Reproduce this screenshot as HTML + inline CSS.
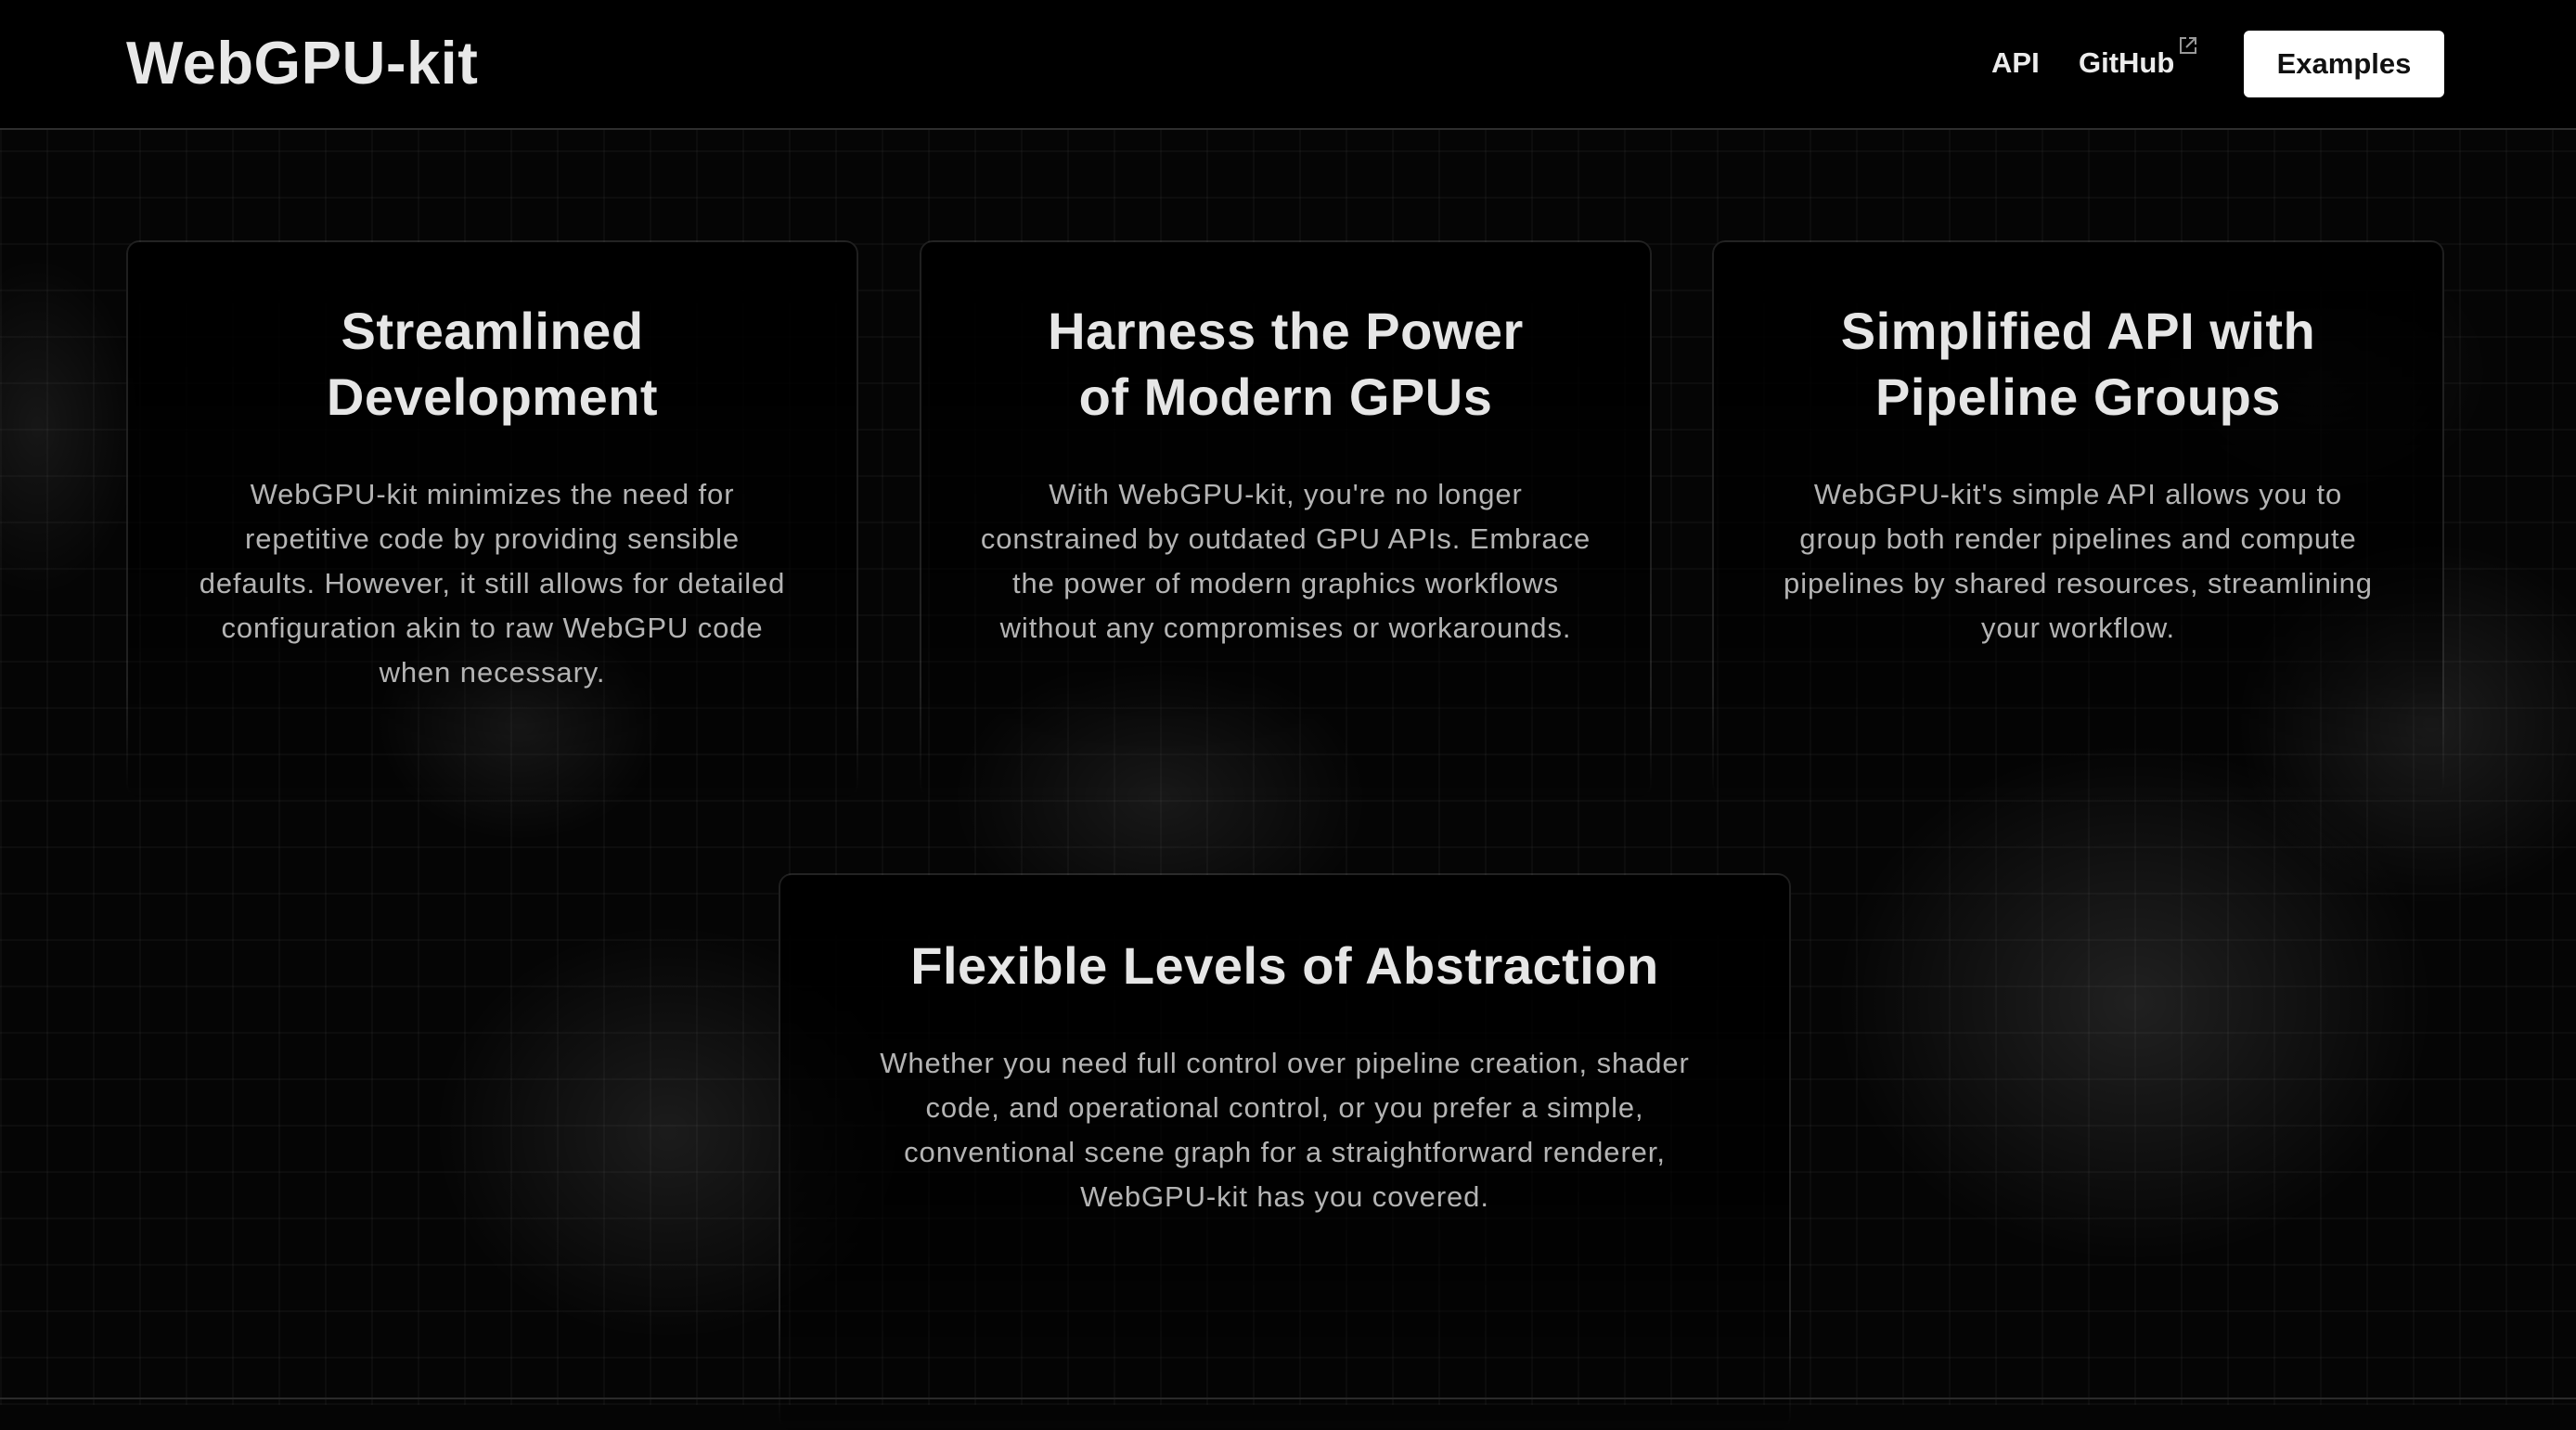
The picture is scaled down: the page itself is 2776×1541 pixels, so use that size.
<!DOCTYPE html>
<html><head><meta charset="utf-8"><style>
html,body{margin:0;padding:0;}
body{width:2776px;height:1514px;overflow:hidden;background:#050505;font-family:"Liberation Sans",sans-serif;position:relative;}
.bg{position:absolute;inset:0;
background:
radial-gradient(ellipse 460px 400px at 2300px 1080px,rgba(255,255,255,.11),transparent 70%),
radial-gradient(ellipse 300px 280px at 2620px 780px,rgba(255,255,255,.09),transparent 70%),
radial-gradient(ellipse 360px 320px at 720px 1220px,rgba(255,255,255,.09),transparent 70%),
radial-gradient(ellipse 320px 220px at 1250px 860px,rgba(255,255,255,.08),transparent 70%),
radial-gradient(ellipse 220px 180px at 560px 780px,rgba(255,255,255,.08),transparent 70%),
radial-gradient(ellipse 160px 260px at 40px 460px,rgba(255,255,255,.07),transparent 70%),
radial-gradient(ellipse 260px 200px at 2500px 400px,rgba(255,255,255,.06),transparent 70%),
#050505;}
.grid{position:absolute;inset:0;background:
repeating-linear-gradient(90deg,rgba(255,255,255,.03) 0 2px,transparent 2px 50px),
repeating-linear-gradient(0deg,rgba(255,255,255,.03) 0 2px,transparent 2px 50px);}
header{position:absolute;left:0;top:0;width:2776px;height:138px;background:#000;border-bottom:2px solid #2e2e2e;}
.logo{position:absolute;left:136px;top:30px;font-size:65px;font-weight:bold;color:#e8e8e8;letter-spacing:0.5px;}
.nav{position:absolute;top:50px;font-size:31px;font-weight:bold;color:#ececec;}
.btn{position:absolute;left:2418px;top:33px;width:216px;height:72px;background:#fff;border-radius:6px;color:#111;font-size:31px;font-weight:bold;text-align:center;line-height:72px;}
.card{position:absolute;border:2px solid rgba(255,255,255,.12);border-radius:14px;background:linear-gradient(#000 0%,rgba(0,0,0,.6) 60%,rgba(0,0,0,0) 100%);
-webkit-mask-image:linear-gradient(#000 80%,transparent 100%);mask-image:linear-gradient(#000 80%,transparent 100%);text-align:center;box-sizing:border-box;}
.card h2{margin:0;font-size:56px;line-height:71px;color:#e6e6e6;font-weight:bold;letter-spacing:0.5px;}
.card p{margin:0;font-size:31px;line-height:48px;color:#b4b4b4;white-space:nowrap;letter-spacing:0.9px;}
.foot{position:absolute;left:0;top:1506px;width:2776px;height:2px;background:#2a2a2a;}
</style></head><body>
<div class="bg"></div><div class="grid"></div>
<header>
<div class="logo">WebGPU-kit</div>
<div class="nav" style="left:2146px">API</div>
<div class="nav" style="left:2240px">GitHub<svg width="22" height="22" viewBox="0 0 22 22" style="position:relative;top:-18px;left:4px"><path d="M9 3H3v16h16v-6M12 3h7v7M19 3L9 13" fill="none" stroke="#999" stroke-width="2"/></svg></div>
<div class="btn">Examples</div>
</header>
<div class="card" style="left:136px;top:259px;width:789px;height:600px;">
<h2 style="margin-top:60px">Streamlined<br>Development</h2>
<p style="margin-top:46px">WebGPU-kit minimizes the need for<br>repetitive code by providing sensible<br>defaults. However, it still allows for detailed<br>configuration akin to raw WebGPU code<br>when necessary.</p>
</div>
<div class="card" style="left:991px;top:259px;width:789px;height:600px;">
<h2 style="margin-top:60px">Harness the Power<br>of Modern GPUs</h2>
<p style="margin-top:46px">With WebGPU-kit, you're no longer<br>constrained by outdated GPU APIs. Embrace<br>the power of modern graphics workflows<br>without any compromises or workarounds.</p>
</div>
<div class="card" style="left:1845px;top:259px;width:789px;height:600px;">
<h2 style="margin-top:60px">Simplified API with<br>Pipeline Groups</h2>
<p style="margin-top:46px">WebGPU-kit's simple API allows you to<br>group both render pipelines and compute<br>pipelines by shared resources, streamlining<br>your workflow.</p>
</div>
<div class="card" style="left:839px;top:941px;width:1091px;height:600px;">
<h2 style="margin-top:62px">Flexible Levels of Abstraction</h2>
<p style="margin-top:46px">Whether you need full control over pipeline creation, shader<br>code, and operational control, or you prefer a simple,<br>conventional scene graph for a straightforward renderer,<br>WebGPU-kit has you covered.</p>
</div>
<div class="foot"></div>
</body></html>
